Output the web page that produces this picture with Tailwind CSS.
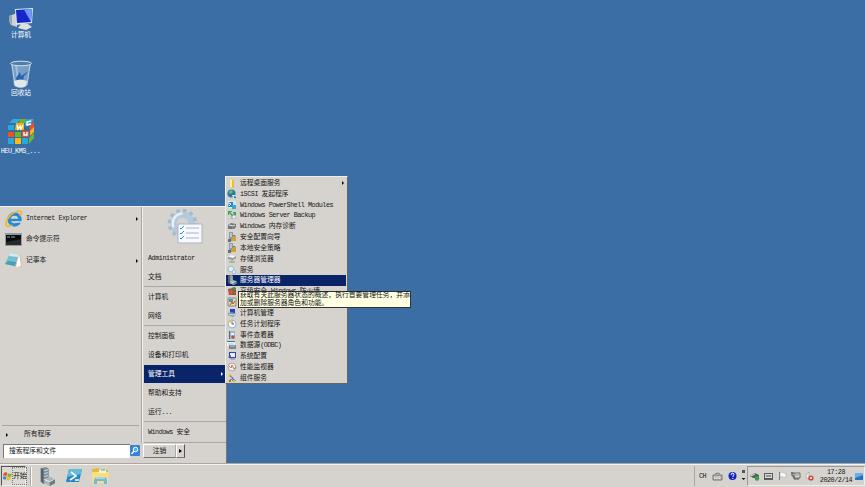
<!DOCTYPE html>
<html lang="zh-CN">
<head>
<meta charset="utf-8">
<title>桌面</title>
<script src="https://cdn.jsdelivr.net/npm/@tailwindcss/browser@4"></script>
</head>
<body class="relative h-[487px] w-[865px] overflow-hidden bg-[#3a6ea5] font-['Liberation_Mono','Noto_Sans_CJK_SC',monospace] text-[6.75px] leading-[10px] whitespace-pre text-[#151515]">
<svg class="hidden">
  <symbol id="server" viewBox="0 0 18 20"><path d="M2 1l6-1 3 2v13l-6 3-3-3z" fill="#818d94"/><path d="M2 1l3 2v15l-3-3z" fill="#56636c"/><path d="M6 4l4-1M6 7l4-1M6 10l4-1" stroke="#dce8ec"/><path d="M6 13l6-3 6 3v4l-6 3-6-3z" fill="#a9b6bd"/><path d="M6 13l6 2.5 6-2.5" stroke="#edf4f6" fill="none"/><path d="M12 16v4l6-3v-4z" fill="#6d7b83"/></symbol>
  <symbol id="pc" viewBox="0 0 26 24"><path d="M1 9l8-3v14l-6-2-2-4z" fill="#cdd2d5"/><path d="M1 9l3-1v10l-3-4z" fill="#9ba6ae"/><path d="M7 2l18-1-1 15-16 2z" fill="#dce6ef"/><path d="M8 3l16-1-1 13-14 1z" fill="#1726c8"/><path d="M16 2.5l8-.5-1 13z" fill="#6f9af4"/><path d="M13 17h7l4 3-6 3-8-2z" fill="#dedfdf"/></symbol>
  <symbol id="gear" viewBox="0 0 24 24"><circle cx="12" cy="12" r="7" fill="none" stroke="#b5c9dc" stroke-width="5"/><circle cx="12" cy="12" r="10.2" fill="none" stroke="#a3bbd0" stroke-width="2.6" stroke-dasharray="2.8 2.55"/><path d="M5 15a8 8 0 0 1 7-11" fill="none" stroke="#e6f0f7" stroke-width="2"/></symbol>
  <symbol id="secure" viewBox="0 0 10 10"><path d="M2 0h4v9H2z" fill="#8b9ca6"/><path d="M3 2h2M3 4h2" stroke="#e6eef3"/><path d="M5 5h4v4H5z" fill="#d8a21d"/><path d="M6 5V3.5h2V5" fill="none" stroke="#777"/><path d="M1 7h3v3H1z" fill="#65747c"/></symbol>
  <symbol id="book" viewBox="0 0 10 10"><path d="M2 1h6v8H2z" fill="#9eb4cc"/><path d="M2 1h1v8H2z" fill="#576b83"/><path d="M4 3h3v2H4z" fill="#f4f6ff"/><circle cx="6" cy="7" r="1.6" fill="#ce4335"/></symbol>
  <symbol id="win" viewBox="0 0 10 10"><path d="M1 1.5q2-1.5 4 0L4 5Q2 4 0 5z" fill="#e8532b"/><path d="M5.5 2q2 1.5 4.5 0l-1 3.5q-2 1-4.2 0z" fill="#77b82a"/><path d="M0 5.7q2-1 4 0L3 9.2Q1 8-1 9z" fill="#348bd7"/><path d="M4.5 6q2 1 4.3 0l-1 3.5q-2 1-4 0z" fill="#f5bc21"/></symbol>
</svg>

<!-- desktop icons -->
<div class="absolute left-0 top-[7px] flex w-[42px] flex-col items-center text-[6.7px] text-white">
  <svg class="h-[24px] w-[26px]"><use href="#pc"/></svg>
  <span class="-mt-px">计算机</span>
  <svg class="mt-[20px] h-[29px] w-[24px]" viewBox="0 0 24 29"><path d="M2 3l3 23q7 4 13 0l4-23z" fill="#86abcb" fill-opacity=".8"/><path d="M3 5l3 20M21 5l-3 20" stroke="#d3e6f2" stroke-opacity=".7"/><path d="M7 4l2 17" stroke="#bcd7ea" stroke-opacity=".6" stroke-width="2"/><path d="M7 18l4-6 1 4 8-5-5 5-1 5-6 1z" fill="#2464b4"/><path d="M5 21q7-3 13 0l-1 5q-5 3-11 0z" fill="#e3e7ea"/><ellipse cx="12" cy="3.5" rx="10.5" ry="2.3" fill="#4e7fab" stroke="#d5e1e9"/></svg>
  <span class="-mt-px">回收站</span>
  <svg class="mt-[20px] h-[28px] w-[28px]" viewBox="0 0 28 28"><path d="M1 7l6-6h20v18l-6 8H1z" fill="#356d9b"/><path d="M3 4l3-3h7l-2 4H2zM22 1h5l-3 5h-5z" fill="#35a7dc"/><path d="M13 1h7l-2 4h-6z" fill="#71b51f"/><path d="M1 7h6v5H1zM1 20h6v6H1zM15 20h6v6h-6z" fill="#26a8df"/><path d="M1 14h6v5H1z" fill="#ee4f29"/><path d="M8 14h6v5H8z" fill="#71b51f"/><path d="M8 20h6v6H8z" fill="#ffb714"/><path d="M9 5h8v7H8z" fill="#f6ae19"/><path d="M15 13h7v6h-7z" fill="#e9502f"/><path d="M18 2l7-1-1 6-6 1z" fill="#31acd6"/><path d="M22 9l5-6v6l-4 4z" fill="#e9502f"/><path d="M23 13l4-4v5l-4 4z" fill="#f8b526"/><path d="M22 20l5-5v5l-5 6z" fill="#6cb534"/><path d="M10 7l1 4 2-3 1 3 2-4M24 3l-4 1v3l4-1M17 14v3h3v-3" fill="none" stroke="#fff" stroke-width="1.4"/></svg>
  <span class="-ml-px w-[41px] text-center font-['DejavU_Serif','Liberation_Mono'] text-[6.75px] tracking-[-.45px]"><span class="font-['Liberation_Mono']">HEU_KMS_...</span></span>
</div>

<!-- start menu -->
<main class="absolute left-0 top-[206px] flex h-[257px] w-[227px] flex-col border-t border-r border-t-[#f3f1ec] border-r-[#777] bg-[#d6d3ce]">
  <div class="flex h-[236px]">
    <section class="flex w-[142px] flex-col border-r border-[#aaa7a2] pl-[5px]">
      <div class="flex h-[22px] items-center pt-px">
        <svg class="h-[18px] w-[18px]" viewBox="0 0 18 18"><circle cx="9.5" cy="9.5" r="5.5" fill="none" stroke="#2689d4" stroke-width="3.4"/><path d="M5 10h11" stroke="#2689d4" stroke-width="2.5"/><path d="M11 12h6" stroke="#d6d3ce" stroke-width="1.6"/><path d="M2 16C-2 13 6 1 15 1q3 1 0 5M2 16q2 1 5-1" fill="none" stroke="#f0b52d" stroke-width="1.7"/></svg>
        <span class="-mt-px ml-[3px] tracking-[-.45px]">Internet Explorer</span><i class="mr-[3px] ml-auto border-y-2 border-l-[2.5px] border-y-transparent border-l-black"></i>
      </div>
      <div class="flex h-[21px] items-center">
        <svg class="h-[13px] w-[17px]" viewBox="0 0 17 13"><path d="M0 0h17v13H0z" fill="#929b9f"/><path d="M1 2h15v10H1z" fill="#080a0b"/><path d="M2 4h3m1 0h4" stroke="#ccc" stroke-width=".8"/><path d="M1 9l15-3v6H1z" fill="#252a2c"/></svg>
        <span class="-mt-px ml-[4px]">命令提示符</span>
      </div>
      <div class="flex h-[21px] items-center">
        <svg class="-mt-px h-[16px] w-[17px]" viewBox="0 0 17 16"><path d="M6 1l9 1 2 13H9z" fill="#d7c196"/><path d="M14 2l2 12-5 1z" fill="#fff"/><path d="M5 1l9 1-4 12-10-2z" fill="#74bfd2"/><path d="M5 1l9 1-1 3-9-1z" fill="#d2edf2"/><path d="M3 9l8 1-1 4-10-2z" fill="#459fbc"/></svg>
        <span class="-mt-px ml-[4px]">记事本</span><i class="mr-[3px] ml-auto border-y-2 border-l-[2.5px] border-y-transparent border-l-black"></i>
      </div>
      <div class="mt-auto mr-[2px] -ml-[3px] flex h-[18px] items-center border-t border-[#aaa7a2] pl-[4px]">
        <i class="border-y-2 border-l-[2.5px] border-y-transparent border-l-black"></i><span class="-mt-px ml-[16px]">所有程序</span>
      </div>
    </section>
    <section class="flex w-[84px] flex-col border-l border-[#f2f0ec] pl-[1px] [&>div]:shrink-0">
      <div class="relative h-[41px]">
        <svg class="absolute left-[23px] top-[1px] h-[36px] w-[36px]" viewBox="0 0 36 36"><svg width="31" height="31"><use href="#gear"/></svg><path d="M11 16h24v19H11z" fill="#f8f9ff" stroke="#aab3c2"/><path d="M19 20h13M19 25h13M19 30h13" stroke="#a9b5c9"/><path d="M13 20l1 1 3-3M13 25l1 1 3-3M13 30l1 1 3-3" fill="none" stroke="#348cba"/></svg>
      </div>
      <div class="flex h-[20px] items-center pl-[4px] tracking-[-.45px]">Administrator</div>
      <div class="flex h-[19px] items-center border-b border-[#aaa7a2] pl-[4px]">文档</div>
      <div class="flex h-[20px] items-center pl-[4px]">计算机</div>
      <div class="flex h-[19px] items-center border-b border-[#aaa7a2] pl-[4px]">网络</div>
      <div class="flex h-[20px] items-center pl-[4px]">控制面板</div>
      <div class="flex h-[19px] items-center pb-px pl-[4px]">设备和打印机</div>
      <div class="flex h-[18px] items-center bg-[#0a246a] pr-[3px] pb-px pl-[4px] text-white">管理工具<i class="ml-auto border-y-2 border-l-[2.5px] border-y-transparent border-l-white"></i></div>
      <div class="flex h-[20px] items-center pb-px pl-[4px]">帮助和支持</div>
      <div class="flex h-[19px] items-center border-b border-[#aaa7a2] pl-[4px]"><span>运行<span class="tracking-[-.5px]">...</span></span></div>
      <div class="flex h-[21px] items-center border-b border-[#aaa7a2] pl-[4px]"><span><span class="tracking-[-.5px]">Windows </span>安全</span></div>
    </section>
  </div>
  <div class="flex h-[17px] items-start pt-[1px] pl-[3px]">
    <div class="flex h-[14px] w-[127px] items-center border-t border-l border-[#777] bg-white pb-px pl-[5px]">搜索程序和文件</div>
    <svg class="mt-[1px] h-[11px] w-[10px]" viewBox="0 0 10 11"><rect width="10" height="11" rx="1" fill="#3683d5"/><circle cx="5.5" cy="4.5" r="2.3" fill="#5daced" stroke="#fff"/><path d="M4 6L1.5 9" stroke="#fff" stroke-width="1.3"/></svg>
    <div class="ml-[3px] flex h-[14px] w-[33px] items-center justify-center border border-t-white border-r-[#aaa] border-b-[#777] border-l-white">注销</div>
    <div class="flex h-[14px] w-[9px] items-center justify-center border border-t-white border-r-[#555] border-b-[#777] border-l-white"><i class="border-y-[2.5px] border-l-[3px] border-y-transparent border-l-black"></i></div>
  </div>
</main>

<!-- administrative tools submenu -->
<nav class="absolute left-[225px] top-[176px] grid h-[208px] w-[123px] auto-rows-[10.83px] border border-t-[#efede8] border-r-[#666] border-b-[#666] border-l-[#efede8] bg-[#d6d3ce] pt-[.6px] pr-px [&>div]:flex [&>div]:items-center [&>div]:gap-[3px] [&>div]:pl-px [&_svg]:h-[10px] [&_svg]:w-[10px] [&_svg]:shrink-0">
  <div><svg viewBox="0 0 10 10"><path d="M3 1l4 1v8L3 9z" fill="#ebbd38"/><path d="M3 1l2 1v7L3 9z" fill="#fff0a2"/></svg>远程桌面服务<i class="mr-[2px] ml-auto border-y-2 border-l-[2.5px] border-y-transparent border-l-black"></i></div>
  <div><svg viewBox="0 0 10 10"><circle cx="4.5" cy="4.5" r="4" fill="#2479a8"/><path d="M2 2l3-1 1 2-2 2-2-1z" fill="#69bd65"/><path d="M5 6h3v3H6z" fill="#d5e9ec"/><path d="M7 7l2 1v1H7z" fill="#376a7b"/></svg><span><span class="tracking-[-.45px]">iSCSI </span>发起程序</span></div>
  <div><svg viewBox="0 0 10 10"><path d="M1 1h8v7H1z" fill="#d2eaf8"/><path d="M2 2h4v5H1z" fill="#2285c9"/><path d="M5 5h4v4H5z" fill="#3aa2dd"/><path d="M2 3l2 1-2 2" stroke="#fff" fill="none"/></svg><span class="tracking-[-.47px]">Windows PowerShell Modules</span></div>
  <div><svg viewBox="0 0 10 10"><path d="M4 4h5v5H4z" fill="#a7b4ba"/><path d="M1 1h4v1H3l3 3-1 1-3-3v2H1zM6 2h3v3H7z" fill="#32aa46"/><circle cx="7" cy="7" r="1.5" fill="#eef"/></svg><span class="tracking-[-.47px]">Windows Server Backup</span></div>
  <div><svg viewBox="0 0 10 10"><path d="M1 4l3-2 5 1v3L7 8 1 7z" fill="#72777b"/><path d="M2 4l4 1 2-1" stroke="#eee" fill="none"/><path d="M2 7v1m2-1v1" stroke="#333"/></svg><span><span class="tracking-[-.47px]">Windows </span>内存诊断</span></div>
  <div><svg><use href="#secure"/></svg>安全配置向导</div>
  <div><svg><use href="#secure"/></svg>本地安全策略</div>
  <div><svg viewBox="0 0 10 10"><path d="M1 3l3-2 5 1-3 2z" fill="#f4f5f5"/><path d="M1 3l5 1 3-2v2L6 6 1 5z" fill="#90999e"/><path d="M5 6v2M2 8h6" stroke="#7d9299"/><path d="M4 7h2v2H4z" fill="#d4b348"/></svg>存储浏览器</div>
  <div><svg viewBox="0 0 10 10"><circle cx="4" cy="4" r="2.8" fill="#e3f2fa" stroke="#9fc3dc" stroke-width="1.2"/><circle cx="7" cy="7" r="1.7" fill="#eef4f8" stroke="#a8b7c4"/></svg>服务</div>
  <div class="bg-[#0a246a] text-white"><svg><use href="#server"/></svg>服务器管理器</div>
  <div><svg viewBox="0 0 10 10"><path d="M1 3l5-1 3 2v5H2z" fill="#a64335"/><path d="M1 5h7M2 7h7M4 3v6" stroke="#d98167" stroke-width=".6"/><circle cx="7" cy="3" r="2" fill="#428949"/></svg><span>高级安全 <span class="tracking-[-.47px]">Windows </span>防火墙</span></div>
  <div><svg viewBox="0 0 10 10"><path d="M1 1h8v8H1z" fill="#ecdb9e" stroke="#8a8a80"/><path d="M2 2h4v3H2z" fill="#4895c9"/><path d="M3 8l2-3 1 2 2-3" fill="none" stroke="#b14a31"/></svg>共享和存储管理</div>
  <div><svg viewBox="0 0 10 10"><path d="M3 1h5v5H3z" fill="#2741c4"/><path d="M1 5l4-1 4 2-3 3-5-2z" fill="#7f95a7"/><path d="M2 6l4 1 2-1" fill="none" stroke="#dce6ee"/></svg>计算机管理</div>
  <div><svg viewBox="0 0 10 10"><circle cx="5" cy="5" r="4" fill="#f2f7fa" stroke="#94b4cd"/><path d="M5 2v3h2" fill="none" stroke="#4d6b84"/><path d="M1 3q1-2 4-2v3z" fill="#f0bd55"/></svg>任务计划程序</div>
  <div><svg><use href="#book"/></svg>事件查看器</div>
  <div><svg viewBox="0 0 10 10"><path d="M0 1h8v5H0z" fill="#edf2f4"/><path d="M0 1h8v1H0z" fill="#337bad"/><path d="M2 5h7v4H2z" fill="#738895"/><path d="M3 6h5M1 4h6" stroke="#b5c6d0"/></svg><span>数据源<span class="tracking-[-.55px]">(ODBC)</span></span></div>
  <div><svg viewBox="0 0 10 10"><path d="M2 1h7v6H2z" fill="#2c42b7"/><path d="M3 2h5v4H3z" fill="#e2f2ff"/><path d="M1 6l3-2v4z" fill="#4355be"/><path d="M4 8h4" stroke="#888"/></svg>系统配置</div>
  <div><svg viewBox="0 0 10 10"><circle cx="5" cy="5" r="4" fill="#f3eeea" stroke="#a9a9a9"/><path d="M2 4l2 2 1-3 2 4 2-2" fill="none" stroke="#c65348" stroke-width=".8"/></svg>性能监视器</div>
  <div><svg viewBox="0 0 10 10"><circle cx="3" cy="2.5" r="1.5" fill="#ebbc22"/><path d="M3 3l3 2-4 3" fill="none" stroke="#596ba6"/><path d="M2 7h2v2H2z" fill="#d05b3b"/><path d="M6 5l3 3H5z" fill="#2e81cb"/><circle cx="7" cy="8" r="1.2" fill="#edb832"/></svg>组件服务</div>
</nav>
<div class="absolute left-[238px] top-[291px] h-[17px] w-[173px] border border-[#333] bg-[#ffffe1] pl-px text-[6.8px] leading-[7.5px]">获取有关此服务器状态的概述，执行首要管理任务，并添<br>加或删除服务器角色和功能。</div>

<!-- taskbar -->
<footer class="absolute bottom-0 left-0 flex h-[24px] w-[865px] items-center border-t border-[#aaa7a1] bg-[#d6d3ce] pt-[1px] shadow-[inset_0_1px_0_#f5f3ee]">
  <div class="ml-px flex h-[20px] w-[25px] items-center border border-t-[#555] border-r-[#eee] border-b-[#eee] border-l-[#555] bg-[#dddad5]"><svg class="ml-px h-[10px] w-[9px] shrink-0"><use href="#win"/></svg><span class="border border-dotted border-[#777] py-[3px] text-[7px] tracking-[-.3px]">开始</span></div>
  <i class="ml-[4px] h-[19px] w-[2px] border-l border-[#aaa] bg-white"></i>
  <svg class="ml-[7px] h-[19px] w-[16px]" viewBox="0 0 18 20" preserveAspectRatio="none"><use href="#server" width="18" height="20"/></svg>
  <svg class="ml-[11px] h-[14px] w-[16px]" viewBox="0 0 16 14"><path d="M3 0h13l-3 13H0z" fill="#2589bd"/><path d="M3 0h13l-1 5-14 3z" fill="#66bbdc"/><path d="M5 3l5 4-6 4M9 11h4" fill="none" stroke="#fff" stroke-width="1.7"/></svg>
  <svg class="ml-[9px] h-[18px] w-[19px]" viewBox="0 0 19 18"><path d="M1 2l6-1 2 2h8v12H1z" fill="#e3b842"/><path d="M1 5h17l-1 11H1z" fill="#f9de7c"/><path d="M8 3h7v3H8z" fill="#edf5e5"/><path d="M10 3h4" stroke="#7bb34e"/><path d="M3 17v-4q1-3 4-3h6q3 0 3 3v4h-3v-3H6v3z" fill="#70b9df"/><path d="M5 11h9" stroke="#d2f1ff"/></svg>
  <div class="ml-auto flex h-[20px] items-center border-l border-[#aaa7a1] pl-[4px] text-[6px]">
    <span class="w-[10px] text-[6.75px] tracking-[-.45px]">CH</span>
    <svg class="ml-[3px] h-[9px] w-[11px]" viewBox="0 0 11 9"><path d="M1 3h9v5H1z" fill="#b4b6b0" stroke="#777"/><path d="M2 5h7M2 6.5h7" stroke="#eee" stroke-dasharray="1 .7"/><path d="M3 2q3-2 5 0" fill="none" stroke="#777"/></svg>
    <svg class="ml-[5px] h-[10px] w-[9px]" viewBox="0 0 9 10"><circle cx="4.5" cy="5" r="4" fill="#1626c5"/><path d="M3 4q0-2 2-2 2 1 0 3v1M4.8 7v1" fill="none" stroke="#fff"/></svg>
    <svg class="ml-[4px] h-[15px] w-[5px]" viewBox="0 0 5 15"><path d="M1 1h3v3H1z" fill="#555"/><path d="M.5 9h4l-2 2z" fill="#111"/></svg>
    <div class="ml-[1px] flex h-[20px] w-[118px] items-center border border-t-[#999] border-r-[#eee] border-b-[#eee] border-l-[#999]">
      <svg class="ml-[2px] h-[9px] w-[10px]" viewBox="0 0 10 9"><path d="M0 4l5-3 4 2v3H3z" fill="#59615f"/><path d="M1 4l4-2" stroke="#ddd"/><circle cx="7" cy="6.5" r="2.2" fill="#35a53e"/></svg>
      <svg class="ml-[4px] h-[9px] w-[9px]" viewBox="0 0 9 9"><path d="M0 1h9v7H0z" fill="#555d60"/><path d="M1 2h7v4H1z" fill="#d6d8d5"/><path d="M2 3h5v2H2z" fill="#8d9492"/></svg>
      <svg class="ml-[5px] h-[10px] w-[9px]" viewBox="0 0 9 10"><path d="M1.5 1v8" stroke="#777"/><path d="M2 1.5q2-1 3 0 1 1 3 .5v4q-2 1-3 0-1-1-3 0z" fill="#fafafa" stroke="#aaa" stroke-width=".6"/></svg>
      <svg class="ml-[4px] h-[10px] w-[10px]" viewBox="0 0 10 10"><path d="M3 2h6v5H3z" fill="#ddd" stroke="#666"/><path d="M1 1v4h2v3h5M0 2h3" fill="none" stroke="#555"/><path d="M4 4h4" stroke="#888"/></svg>
      <svg class="ml-[4px] h-[10px] w-[9px]" viewBox="0 0 9 10"><path d="M1 4l3-3v8L1 6z" fill="#eee" stroke="#999" stroke-width=".6"/><circle cx="6" cy="7" r="2.6" fill="#d94334"/><path d="M5 6l2 2m0-2L5 8" stroke="#fff" stroke-width=".8"/></svg>
      <div class="ml-[5px] w-[34px] text-center text-[6.75px] leading-[8.5px] tracking-[-.45px]">17:28<br>2020/2/14</div>
      <svg class="ml-[2px] h-[7px] w-[8px]" viewBox="0 0 8 7"><path d="M0 0h8v7H0z" fill="#2572c6"/><path d="M0 0h8v2L0 5z" fill="#68afe9"/></svg>
    </div>
  </div>
</footer>
</body>
</html>
